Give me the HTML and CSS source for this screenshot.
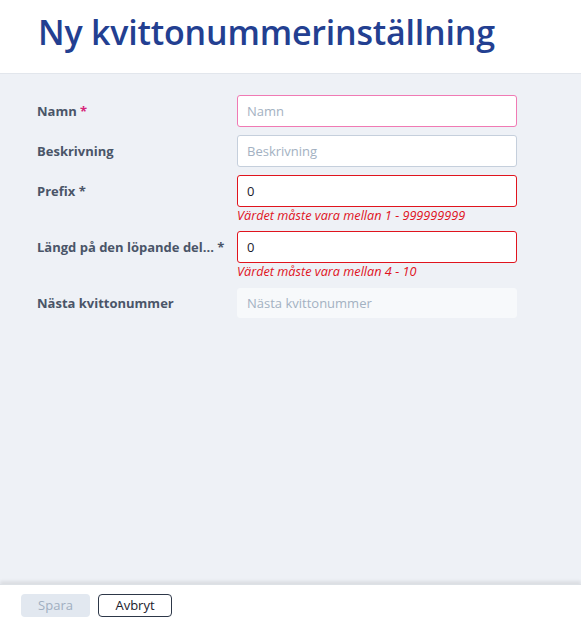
FILE: index.html
```html
<!DOCTYPE html>
<html lang="sv">
<head>
<meta charset="utf-8">
<title>Ny kvittonummerinställning</title>
<link rel="stylesheet" href="styles.css">
</head>
<body>
<div class="page">
  <header class="header">
    <h1 class="title">Ny kvittonummerinställning</h1>
  </header>
  <main class="main">
    <form class="form">
      <label class="label">Namn <span class="req req-pink">*</span></label>
      <div class="field"><input class="input input-focus" placeholder="Namn"></div>

      <label class="label">Beskrivning</label>
      <div class="field"><input class="input" placeholder="Beskrivning"></div>

      <label class="label">Prefix <span class="req">*</span></label>
      <div class="field">
        <input class="input input-error" value="0">
        <div class="error">Värdet måste vara mellan 1 - 999999999</div>
      </div>

      <label class="label">Längd på den löpande del... <span class="req">*</span></label>
      <div class="field">
        <input class="input input-error" value="0">
        <div class="error">Värdet måste vara mellan 4 - 10</div>
      </div>

      <label class="label">Nästa kvittonummer</label>
      <div class="field"><input class="input input-disabled" placeholder="Nästa kvittonummer" disabled></div>
    </form>
  </main>
  <footer class="footer">
    <button class="btn btn-save" disabled>Spara</button>
    <button class="btn btn-cancel">Avbryt</button>
  </footer>
</div>
</body>
</html>
```
FILE: styles.css
```css
html, body {
  margin: 0;
  padding: 0;
  height: 100%;
}
body {
  font-family: "Open Sans", "Noto Sans", sans-serif;
  color: #2d3748;
}
.page {
  height: 100%;
  display: flex;
  flex-direction: column;
}
.header {
  background: #fff;
  height: 74px;
  border-bottom: 1px solid #e2e6ec;
  box-sizing: border-box;
  padding: 12px 0 0 38px;
}
.title {
  margin: 0;
  font-size: 34px;
  line-height: 40px;
  font-weight: 600;
  color: #233f91;
  letter-spacing: -0.2px;
}
.main {
  flex: 1;
  background: #eef1f6;
  padding: 21px 0 0 37px;
}
.form {
  display: grid;
  grid-template-columns: 200px 280px;
  row-gap: 8px;
}
.label {
  font-size: 13px;
  font-weight: 700;
  color: #4a5568;
  line-height: 32px;
}
.req { color: #4a5568; }
.req-pink { color: #d6247a; }
.field {
  display: flex;
  flex-direction: column;
}
.input {
  box-sizing: border-box;
  width: 280px;
  height: 32px;
  border: 1px solid #c5cfdc;
  border-radius: 3px;
  background: #fff;
  padding: 0 9px;
  font-family: inherit;
  font-size: 13px;
  color: #1a202c;
  outline: none;
}
.input::placeholder { color: #a3b1c2; }
.input-focus { border-color: #f07ab4; }
.input-error { border-color: #e0141e; }
.input-disabled {
  background: #f7f9fb;
  border-color: #f7f9fb;
  height: 30px;
  margin-top: 1px;
}
.error {
  color: #e0141e;
  font-style: italic;
  font-size: 12.7px;
  line-height: 16px;
}
.footer {
  height: 39px;
  background: #fff;
  box-shadow: 0 -3px 3px rgba(0,0,0,0.08);
  border-top: 1px solid #dde1e6;
  box-sizing: border-box;
  display: flex;
  align-items: center;
  gap: 8px;
  padding-left: 21px;
  padding-top: 2px;
}
.btn {
  font-family: inherit;
  font-size: 13px;
  height: 23px;
  border-radius: 4px;
  padding: 0;
  box-sizing: border-box;
}
.btn-save {
  width: 69px;
  background: #e2e8f0;
  color: #a0aec0;
  border: none;
}
.btn-cancel {
  width: 74px;
  background: #fff;
  color: #1a202c;
  border: 1px solid #2d3748;
}
```
